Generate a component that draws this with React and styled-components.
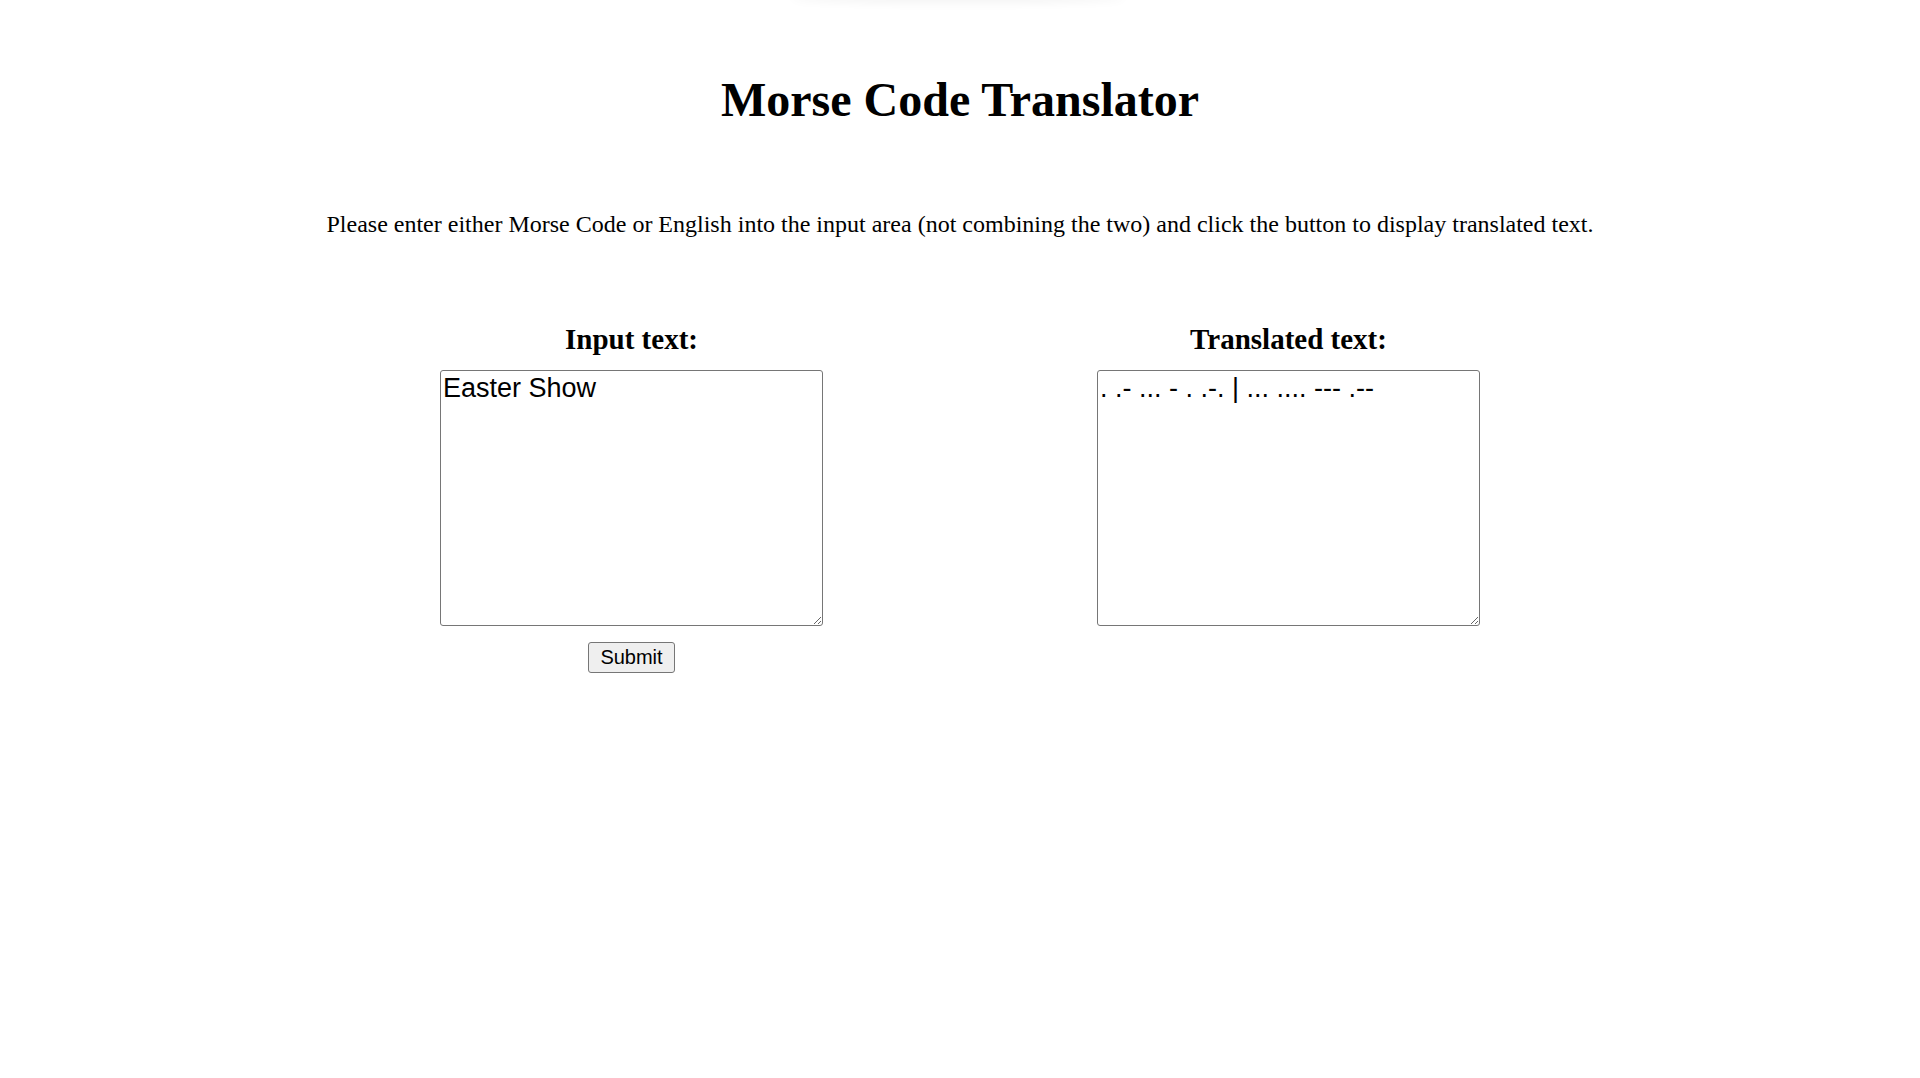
import React, { useState } from 'react';
import styled, { createGlobalStyle } from 'styled-components';

const GlobalStyle = createGlobalStyle`
  html, body {
    margin: 0;
    padding: 0;
    background: #ffffff;
  }
  body {
    font-family: 'Liberation Serif', 'Times New Roman', serif;
    color: #000000;
  }
`;

const Page = styled.div`
  position: relative;
  min-height: 1078px;
  display: flex;
  flex-direction: column;
  align-items: center;
`;

const TopShade = styled.div`
  position: absolute;
  top: -4px;
  left: 50%;
  width: 330px;
  height: 4px;
  margin-left: -167px;
  border-radius: 50%;
  box-shadow: 0 0 10px 3px rgba(0, 0, 0, 0.05);
`;

const Title = styled.h1`
  margin: 72px 0 0;
  font-size: 48px;
  font-weight: bold;
  line-height: normal;
`;

const Intro = styled.p`
  margin: 84px 0 0;
  font-size: 24px;
  line-height: normal;
`;

const Columns = styled.div`
  display: flex;
  justify-content: center;
  gap: 274px;
  margin-top: 85px;
`;

const Column = styled.div`
  display: flex;
  flex-direction: column;
  align-items: center;
  width: 383px;
`;

const Label = styled.h2`
  margin: 0 0 14px;
  font-size: 29px;
  font-weight: bold;
  line-height: normal;
`;

const TextBox = styled.textarea`
  box-sizing: border-box;
  width: 383px;
  height: 256px;
  margin: 0;
  padding: 2px;
  border: 1px solid #767676;
  border-radius: 3px;
  font-family: 'Liberation Sans', Arial, sans-serif;
  font-size: 27px;
  color: #000000;
  background: #ffffff;
  outline: none;
`;

const SubmitButton = styled.button`
  margin-top: 16px;
  height: 31px;
  padding: 0 11px;
  border: 1px solid #767676;
  border-radius: 3px;
  background: #efefef;
  font-family: 'Liberation Sans', Arial, sans-serif;
  font-size: 20px;
  color: #000000;
  cursor: pointer;
`;

const morse = {
  a: '.-', b: '-...', c: '-.-.', d: '-..', e: '.', f: '..-.', g: '--.',
  h: '....', i: '..', j: '.---', k: '-.-', l: '.-..', m: '--', n: '-.',
  o: '---', p: '.--.', q: '--.-', r: '.-.', s: '...', t: '-', u: '..-',
  v: '...-', w: '.--', x: '-..-', y: '-.--', z: '--..'
};

const toMorse = text =>
  text
    .toLowerCase()
    .split(' ')
    .map(word => word.split('').map(ch => morse[ch] || '').join(' '))
    .join(' | ');

export default function App() {
  const [input, setInput] = useState('Easter Show');
  const [output, setOutput] = useState(toMorse('Easter Show'));

  return (
    <Page>
      <GlobalStyle />
      <TopShade />
      <Title>Morse Code Translator</Title>
      <Intro>
        Please enter either Morse Code or English into the input area (not
        combining the two) and click the button to display translated text.
      </Intro>
      <Columns>
        <Column>
          <Label>Input text:</Label>
          <TextBox value={input} onChange={e => setInput(e.target.value)} />
          <SubmitButton onClick={() => setOutput(toMorse(input))}>
            Submit
          </SubmitButton>
        </Column>
        <Column>
          <Label>Translated text:</Label>
          <TextBox value={output} readOnly />
        </Column>
      </Columns>
    </Page>
  );
}
